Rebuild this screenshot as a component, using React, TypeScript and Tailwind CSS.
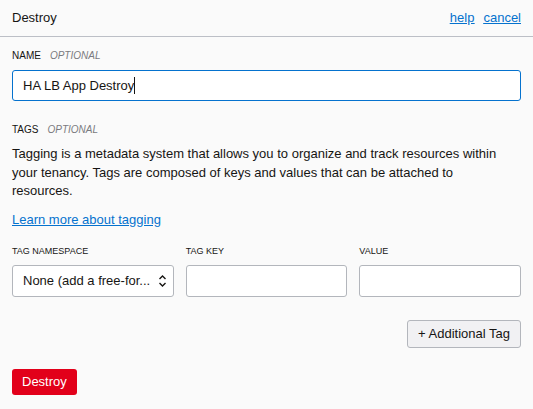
import React from "react";

export default function App() {
  const font = { fontFamily: '"Liberation Sans", Arial, sans-serif' };
  return (
    <div className="w-[533px] h-[409px] bg-[#fafafa] text-[#161513] overflow-hidden" style={font}>
      <div className="h-[37px] px-3 flex items-center justify-between border-b border-[#bcbfc6]">
        <div className="text-[13px]">Destroy</div>
        <div className="flex gap-[9px] text-[13px] text-[#0572ce] underline">
          <a href="#">help</a>
          <a href="#">cancel</a>
        </div>
      </div>
      <div className="px-3">
        <div className="pt-[13px] flex items-baseline gap-[9px] text-[10px] leading-[12px]">
          <span className="uppercase">Name</span>
          <span className="italic text-[#7a7a80] uppercase">Optional</span>
        </div>
        <div className="mt-[8px] h-[31px] border border-[#0572ce] rounded-[3px] bg-white flex items-center pl-[10px] text-[13px]">
          <span>HA LB App Destroy</span>
          <span className="w-px h-[17px] bg-[#161513]" />
        </div>
        <div className="mt-[23px] flex items-baseline gap-[9px] text-[10px] leading-[12px]">
          <span className="uppercase">Tags</span>
          <span className="italic text-[#7a7a80] uppercase">Optional</span>
        </div>
        <p className="mt-[9px] text-[13px] leading-[18.5px] pr-[20px]">
          Tagging is a metadata system that allows you to organize and track resources within your tenancy. Tags are composed of keys and values that can be attached to resources.
        </p>
        <a href="#" className="block mt-[10px] text-[13px] leading-[18px] text-[#0572ce] underline w-fit">
          Learn more about tagging
        </a>
        <div className="mt-[16px] grid grid-cols-3 gap-x-3">
          <div>
            <div className="text-[9px] leading-[12px] uppercase">Tag Namespace</div>
            <div className="mt-[8px] h-[32px] border border-[#b3b6bc] rounded-[3px] bg-white flex items-center pl-[10px] pr-[6px] text-[13px]">
              <span className="flex-1 whitespace-nowrap overflow-hidden">None (add a free-for...</span>
              <svg width="9" height="14" viewBox="0 0 9 14" fill="none" stroke="#161513" strokeWidth="1.4">
                <path d="M1.5 5 L4.5 2 L7.5 5" />
                <path d="M1.5 9 L4.5 12 L7.5 9" />
              </svg>
            </div>
          </div>
          <div>
            <div className="text-[9px] leading-[12px] uppercase">Tag Key</div>
            <div className="mt-[8px] h-[32px] border border-[#b3b6bc] rounded-[3px] bg-white" />
          </div>
          <div>
            <div className="text-[9px] leading-[12px] uppercase">Value</div>
            <div className="mt-[8px] h-[32px] border border-[#b3b6bc] rounded-[3px] bg-white" />
          </div>
        </div>
        <div className="mt-[23px] flex justify-end">
          <button className="h-[28px] px-[10px] border border-[#b3b6bc] rounded-[3px] bg-[#f1f1f3] text-[13px] text-[#161513]">
            + Additional Tag
          </button>
        </div>
        <div className="mt-[21px]">
          <button className="h-[26px] px-[10px] rounded-[3px] bg-[#e2001a] text-white text-[13px]">
            Destroy
          </button>
        </div>
      </div>
    </div>
  );
}
